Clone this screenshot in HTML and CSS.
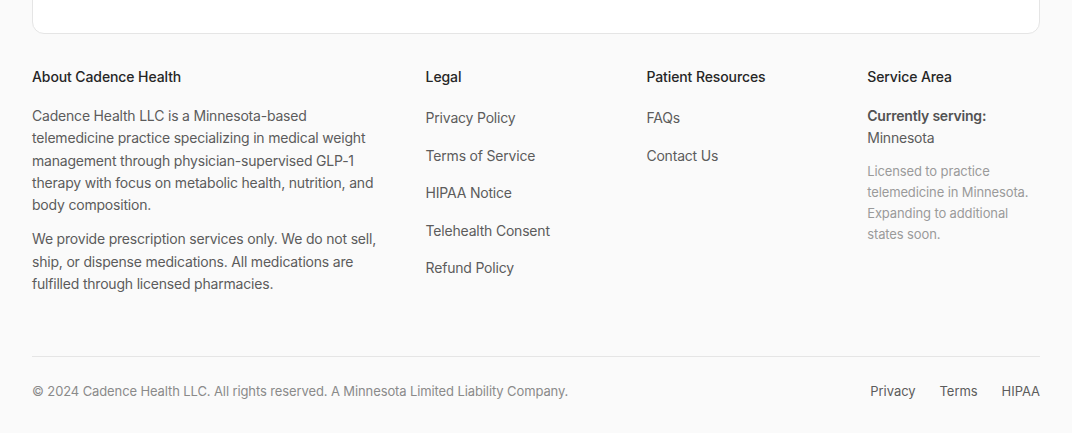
FILE: index.html
```html
<!DOCTYPE html>
<html lang="en">
<head>
<meta charset="utf-8">
<title>Cadence Health</title>
<link rel="stylesheet" href="styles.css">
</head>
<body>
<div class="page">
  <div class="card"></div>
  <footer class="footer">
    <div class="grid">
      <section class="col">
        <h3 class="heading">About Cadence Health</h3>
        <p class="text">Cadence Health LLC is a Minnesota-based telemedicine practice specializing in medical weight management through physician-supervised GLP-1 therapy with focus on metabolic health, nutrition, and body composition.</p>
        <p class="text">We provide prescription services only. We do not sell, ship, or dispense medications. All medications are fulfilled through licensed pharmacies.</p>
      </section>
      <section class="col">
        <h3 class="heading heading-list">Legal</h3>
        <ul class="links">
          <li><a href="#">Privacy Policy</a></li>
          <li><a href="#">Terms of Service</a></li>
          <li><a href="#">HIPAA Notice</a></li>
          <li><a href="#">Telehealth Consent</a></li>
          <li><a href="#">Refund Policy</a></li>
        </ul>
      </section>
      <section class="col">
        <h3 class="heading heading-list">Patient Resources</h3>
        <ul class="links">
          <li><a href="#">FAQs</a></li>
          <li><a href="#">Contact Us</a></li>
        </ul>
      </section>
      <section class="col">
        <h3 class="heading">Service Area</h3>
        <p class="serving"><strong>Currently serving:</strong><br>Minnesota</p>
        <p class="small">Licensed to practice telemedicine in Minnesota. Expanding to additional states soon.</p>
      </section>
    </div>
    <div class="bottom">
      <p class="copy">© 2024 Cadence Health LLC. All rights reserved. A Minnesota Limited Liability Company.</p>
      <nav class="bottom-links">
        <a href="#">Privacy</a>
        <a href="#">Terms</a>
        <a href="#">HIPAA</a>
      </nav>
    </div>
  </footer>
</div>
</body>
</html>
```

FILE: styles.css
```css
* { box-sizing: border-box; }
html, body { margin: 0; padding: 0; }
body {
  background: #fafafa;
  font-family: Inter, "Noto Sans", sans-serif;
  color: #525252;
  -webkit-font-smoothing: antialiased;
}
.page {
  padding: 0 32px;
  overflow: hidden;
  height: 433px;
}
.card {
  margin-top: -40px;
  height: 74px;
  background: #fff;
  border: 1px solid #e5e5e5;
  border-radius: 12px;
}
.footer {
  padding-top: 33px;
}
.grid {
  display: grid;
  grid-template-columns: 2fr 1fr 1fr 1fr;
  column-gap: 48px;
  margin-bottom: 49px;
}
.heading {
  margin: 0 0 18px;
  font-size: 14px;
  line-height: 20px;
  font-weight: 500;
  letter-spacing: -0.1px;
  color: #262626;
}
.heading-list { margin-bottom: 21px; }
.text {
  margin: 0 0 12px;
  font-size: 14px;
  line-height: 22.3px;
  letter-spacing: -0.2px;
  color: #5c5c5c;
}
.links {
  list-style: none;
  margin: 0;
  padding: 0;
  display: flex;
  flex-direction: column;
  gap: 17.5px;
}
.links a {
  display: block;
  font-size: 14px;
  line-height: 20px;
  letter-spacing: -0.2px;
  color: #5c5c5c;
  text-decoration: none;
}
.serving {
  margin: 0 0 11px;
  font-size: 14px;
  line-height: 22.3px;
  letter-spacing: -0.2px;
  color: #5c5c5c;
}
.serving strong { font-weight: 600; color: #525252; }
.small {
  margin: 0;
  font-size: 13px;
  line-height: 21px;
  letter-spacing: -0.12px;
  color: #9a9a9a;
}
.bottom {
  border-top: 1px solid #e5e5e5;
  padding-top: 24px;
  display: flex;
  justify-content: space-between;
  align-items: center;
}
.copy {
  margin: 0;
  font-size: 13px;
  line-height: 20px;
  letter-spacing: -0.11px;
  color: #8a8a8a;
}
.bottom-links {
  display: flex;
  gap: 24px;
}
.bottom-links a {
  font-size: 13px;
  line-height: 20px;
  letter-spacing: -0.05px;
  color: #5c5c5c;
  text-decoration: none;
}
```
